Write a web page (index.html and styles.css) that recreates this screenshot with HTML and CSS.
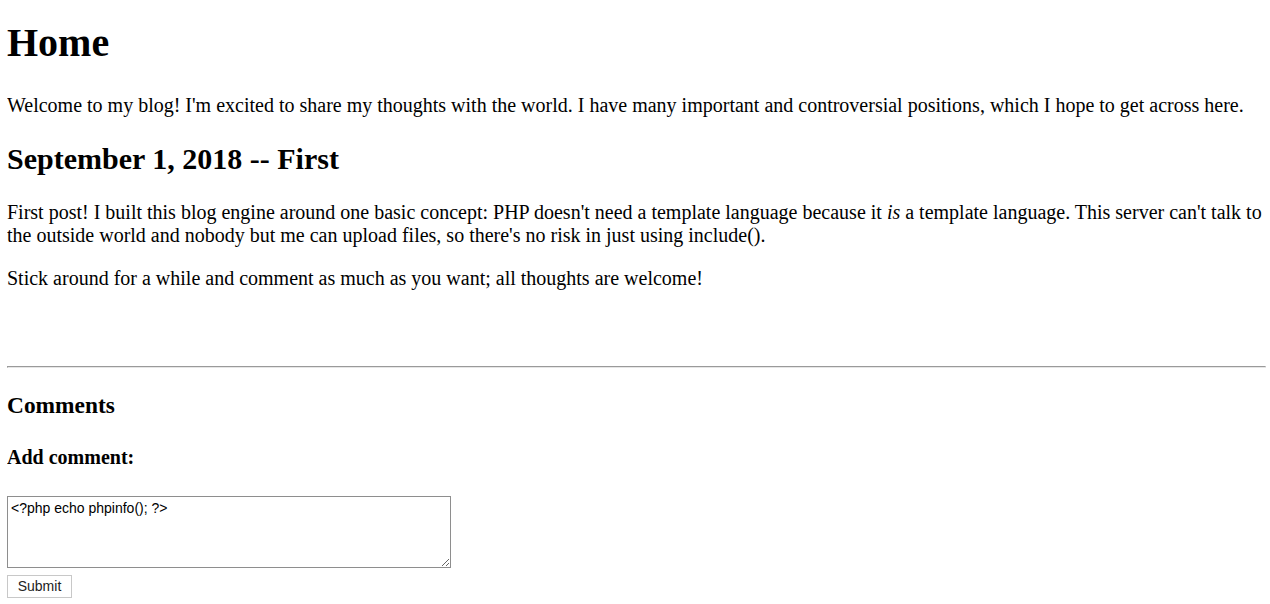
FILE: index.html
```html
<!DOCTYPE html>
<html>
<head>
<meta charset="utf-8">
<title>Home</title>
<link rel="stylesheet" href="styles.css">
</head>
<body class="page">
<h1 class="title">Home</h1>
<p class="text">Welcome to my blog! I'm excited to share my thoughts with the world. I have many important and controversial positions, which I hope to get across here.</p>
<div class="post">
<h2 class="post-title">September 1, 2018 -- First</h2>
<p class="text">First post! I built this blog engine around one basic concept: PHP doesn't need a template language because it <i>is</i> a template language. This server can't talk to the outside world and nobody but me can upload files, so there's no risk in just using include().</p>
<p class="text">Stick around for a while and comment as much as you want; all thoughts are welcome!</p>
<br><br>
</div>
<hr class="rule">
<h3 class="comments-title">Comments</h3>
<h4 class="add-title">Add comment:</h4>
<form class="comment-form">
<textarea class="comment-box" name="comment">&lt;?php echo phpinfo(); ?&gt;</textarea>
<button class="submit-btn" type="button">Submit</button>
</form>
</body>
</html>
```
FILE: styles.css
```css
html {
  background: #fff;
}
.page {
  margin: 0 4px 8px 7px;
  font-family: "Liberation Serif", "Times New Roman", serif;
  font-size: 20px;
  color: #000;
}
.title {
  font-size: 40px;
  margin: 19px 0 28px 0;
}
.text {
  margin: 20px 0;
}
.post-title {
  font-size: 30px;
  margin: 25px 0;
}
.rule {
  margin: 10px 0;
  height: 0;
  border-style: solid;
  border-width: 1px;
  border-color: #9a9a9a #e6e6e6 #e6e6e6 #9a9a9a;
}
.comments-title {
  font-size: 23.4px;
  margin: 24px 0;
}
.add-title {
  font-size: 20px;
  margin: 26.6px 0;
}
.comment-form {
  display: flex;
  flex-direction: column;
  align-items: flex-start;
  gap: 7px;
  margin-top: 27px;
}
.comment-box {
  box-sizing: border-box;
  width: 444px;
  height: 72px;
  margin: 0;
  padding: 3px 3px;
  border: 1px solid #8e8e8e;
  font-family: "Liberation Sans", Arial, sans-serif;
  font-size: 14px;
  line-height: 1.15;
  color: #000;
  resize: both;
}
.submit-btn {
  box-sizing: border-box;
  width: 65px;
  height: 23px;
  padding: 0;
  background: #fff;
  border: 1px solid #c8c8c8;
  border-radius: 0;
  font-family: "Liberation Sans", Arial, sans-serif;
  font-size: 14px;
  color: #222;
}
```
